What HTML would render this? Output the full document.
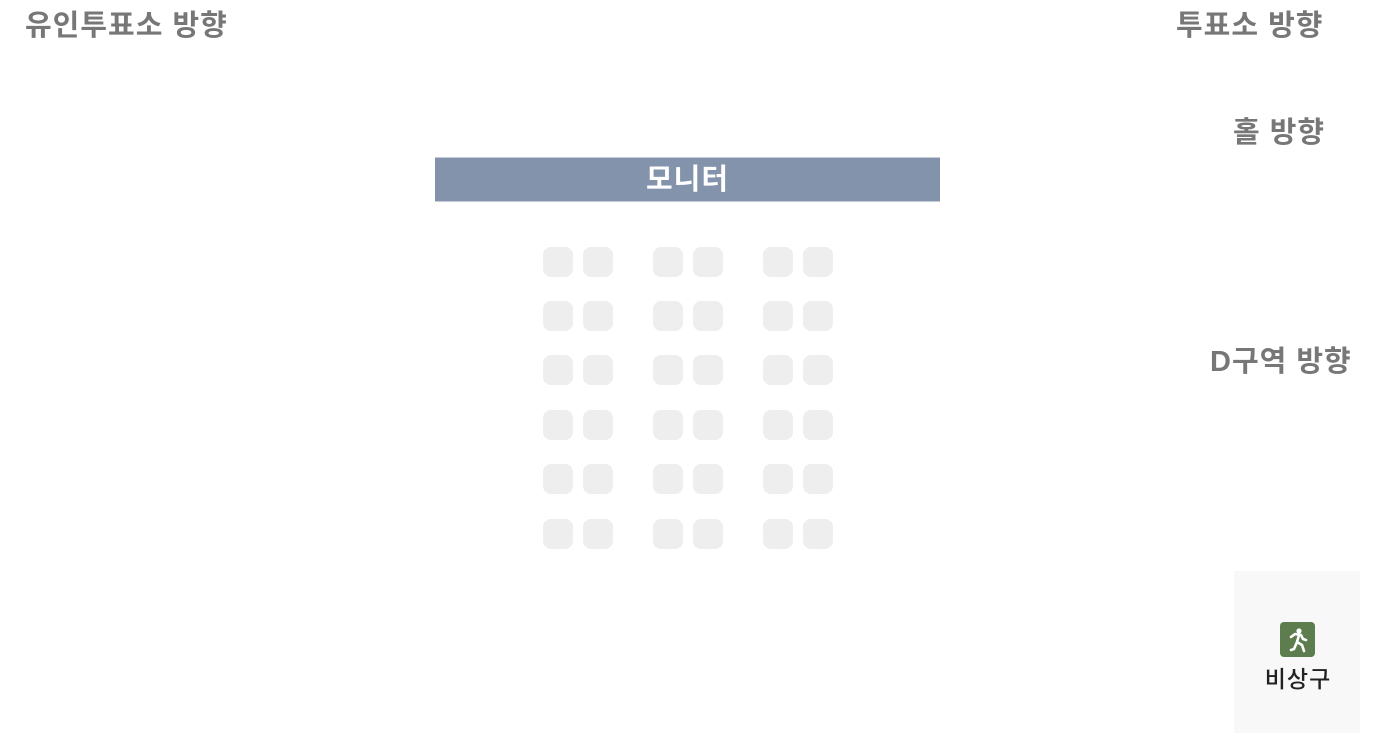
<!DOCTYPE html>
<html><head><meta charset="utf-8"><style>
body{margin:0;width:1375px;height:750px;background:#fff;position:relative;overflow:hidden;font-family:"Liberation Sans","Noto Sans CJK KR",sans-serif}
.l{position:absolute;color:#777;font-weight:bold;font-size:29px;letter-spacing:1px;line-height:30px;white-space:nowrap}
.bar{position:absolute;left:435px;top:157px;width:505px;height:45px;background:#8293ab;color:#fff;font-weight:bold;font-size:29px;letter-spacing:1px;text-align:center;line-height:44px;border-top:1px solid #c5ccd6;border-bottom:1px solid #c5ccd6;box-sizing:border-box}
.s{position:absolute;width:30px;height:30px;border-radius:8px;background:#eee}
.exit{position:absolute;left:1234px;top:571px;width:126px;height:162px;background:#f8f8f8}
.ic{position:absolute;left:46px;top:51px;width:35px;height:35px;background:#5e7d4f;border-radius:4px}
.et{position:absolute;left:0;width:128px;top:94px;text-align:center;font-size:23px;font-weight:500;letter-spacing:1px;color:#222;line-height:28px}
</style></head><body>
<div class="l" style="left:25px;top:11px">유인투표소 방향</div>
<div class="l" style="left:1176px;top:11px">투표소 방향</div>
<div class="l" style="left:1233px;top:118px">홀 방향</div>
<div class="l" style="left:1210px;top:347px">D구역 방향</div>
<div class="bar">모니터</div>
<div id="seats"></div>
<div class="exit"><div class="ic"><svg width="35" height="35" viewBox="0 0 35 35"><circle cx="19" cy="9" r="2.6" fill="#fff"/><path d="M11 15 L15 12 L21 13 L23 17 L26 18 M19 13 L17 20 L22 23 L24 29 M17 20 L14 27 L11 28" stroke="#fff" stroke-width="2.6" fill="none" stroke-linecap="round" stroke-linejoin="round"/></svg></div><div class="et">비상구</div></div>
<script>
var xs=[543,583,653,693,763,803],ys=[247,301,355,410,464,519],h='';
ys.forEach(function(y){xs.forEach(function(x){h+='<div class="s" style="left:'+x+'px;top:'+y+'px"></div>'})});
document.getElementById('seats').innerHTML=h;
</script>
</body></html>
